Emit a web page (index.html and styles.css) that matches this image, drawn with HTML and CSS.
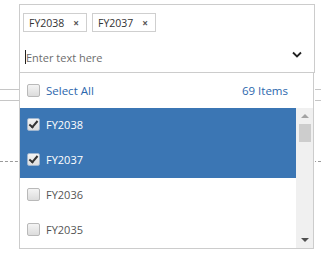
FILE: index.html
```html
<!DOCTYPE html>
<html lang="en">
<head>
    <meta charset="UTF-8" />
    <title>Multi select</title>
    <link rel="stylesheet" href="styles.css">
</head>
<body>

    <div class="backdrop">
        <div class="rule rule-a"></div>
        <div class="rule rule-b"></div>
        <div class="rule rule-dash"></div>
    </div>

    <div class="combo">
        <div class="combo-head">
            <div class="tags">
                <span class="tag">FY2038 <span class="tag-x">&#215;</span></span>
                <span class="tag">FY2037 <span class="tag-x">&#215;</span></span>
            </div>
            <div class="search">
                <span class="caret"></span>
                <span class="placeholder">Enter text here</span>
                <svg class="chevron" width="10" height="7" viewBox="0 0 10 7">
                    <path d="M1 1.5 L5 5.5 L9 1.5" fill="none" stroke="#222" stroke-width="1.8" />
                </svg>
            </div>
        </div>

        <div class="popup">
            <div class="select-all">
                <span class="box"></span>
                <span class="all-label">Select All</span>
                <span class="count">69 Items</span>
            </div>
            <div class="list-wrap">
                <ul class="list">
                    <li class="item selected"><span class="box checked"></span>FY2038</li>
                    <li class="item selected"><span class="box checked"></span>FY2037</li>
                    <li class="item"><span class="box"></span>FY2036</li>
                    <li class="item"><span class="box"></span>FY2035</li>
                </ul>
                <div class="scrollbar">
                    <span class="arrow up"></span>
                    <span class="thumb"></span>
                    <span class="track"></span>
                    <span class="arrow down"></span>
                </div>
            </div>
        </div>
    </div>

</body>
</html>
```

FILE: styles.css
```css
body {
    margin: 0;
    font-family: "Open Sans", "Noto Sans", sans-serif;
    background: #fff;
    width: 321px;
    height: 253px;
    overflow: hidden;
    position: relative;
}

/* page behind the dropdown */
.backdrop {
    padding-top: 89px;
}

.rule {
    height: 0;
    border-top: 1px solid #c6c6c6;
}

.rule-b {
    margin-top: 10px;
}

.rule-dash {
    margin-top: 60px;
    border-top: 1px dashed #9a9a9a;
}

/* the control */
.combo {
    position: absolute;
    left: 19px;
    top: 4px;
    width: 296px;
    background: #fff;
}

.combo-head {
    border: 1px solid #cccccc;
    box-sizing: border-box;
    height: 69px;
}

.tags {
    display: flex;
    gap: 5px;
    padding: 8px 0 0 3px;
}

.tag {
    display: flex;
    align-items: center;
    width: 64px;
    height: 19px;
    box-sizing: border-box;
    border: 1px solid #cfcfcf;
    padding: 0 0 0 5px;
    font-size: 10.5px;
    color: #333;
    gap: 9px;
}

.tag-x {
    font-size: 10px;
    color: #555;
    font-weight: bold;
}

.search {
    display: flex;
    align-items: center;
    height: 16px;
    margin-top: 17px;
    padding-left: 5px;
    padding-right: 12px;
}

.caret {
    width: 1px;
    height: 14px;
    background: #222;
}

.placeholder {
    font-size: 11px;
    color: #6d6d6d;
    flex: 1;
}

.chevron {
    margin-top: -6px;
}

/* dropdown */
.popup {
    width: 295px;
    box-sizing: border-box;
    border: 1px solid #cccccc;
    border-top: none;
    background: #fff;
}

.select-all {
    display: flex;
    align-items: center;
    height: 35px;
    padding: 0 25px 0 7px;
    font-size: 11.5px;
    color: #2c67ad;
}

.all-label {
    flex: 1;
}

.box {
    width: 11px;
    height: 11px;
    border: 1px solid #b9b9b9;
    border-radius: 2px;
    background: linear-gradient(#f4f4f4, #dcdcdc);
    margin-right: 6px;
    position: relative;
    flex: none;
}

.box.checked {
    background: linear-gradient(#f4f4f4, #dedede);
    border-color: #9fb6d0;
}

.box.checked::after {
    content: "";
    position: absolute;
    left: 3px;
    top: 0px;
    width: 3px;
    height: 7px;
    border: solid #333;
    border-width: 0 2px 2px 0;
    transform: rotate(40deg);
}

.list-wrap {
    display: flex;
    height: 140px;
}

.list {
    list-style: none;
    margin: 0;
    padding: 0;
    flex: 1;
}

.item {
    display: flex;
    align-items: center;
    height: 35px;
    padding-left: 7px;
    padding-bottom: 2px;
    box-sizing: border-box;
    font-size: 11px;
    color: #555;
}

.item.selected {
    background: #3b76b4;
    color: #fff;
}

.scrollbar {
    width: 17px;
    background: #f0f0f0;
    display: flex;
    flex-direction: column;
    align-items: center;
}

.arrow {
    width: 0;
    height: 0;
    border-left: 4px solid transparent;
    border-right: 4px solid transparent;
    margin: 6px 0;
}

.arrow.up {
    border-bottom: 4px solid #a3a3a3;
}

.arrow.down {
    border-top: 4px solid #505050;
}

.thumb {
    width: 12px;
    height: 18px;
    background: #cdcdcd;
}

.track {
    flex: 1;
}
```
